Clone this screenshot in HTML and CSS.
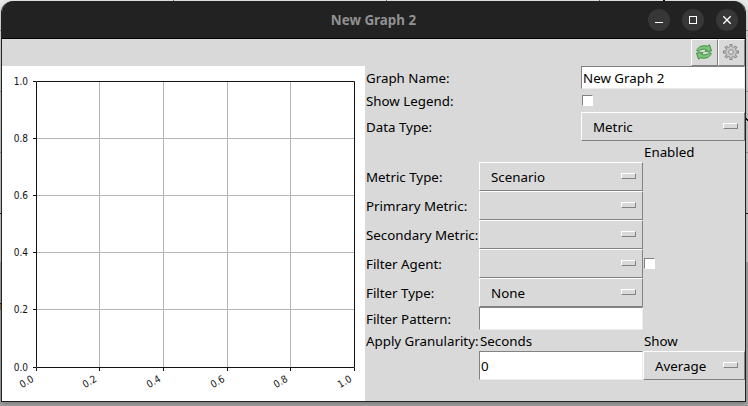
FILE: index.html
```
<!DOCTYPE html>
<html lang="en">
<head>
<meta charset="utf-8">
<title>New Graph 2</title>
<link rel="stylesheet" href="styles.css">
</head>
<body>
<main class="window">
  <header class="titlebar">
    <h1 class="title">New Graph 2</h1>
    <div class="controls">
      <svg width="22" height="22" viewBox="0 0 22 22"><circle cx="11" cy="11" r="11" fill="#373737"/><path d="M7 13.500h8" stroke="#fff"/></svg>
      <svg width="22" height="22" viewBox="0 0 22 22"><circle cx="11" cy="11" r="11" fill="#373737"/><rect x="7.500" y="7.500" width="7" height="7" fill="none" stroke="#fff"/></svg>
      <svg width="22" height="22" viewBox="0 0 22 22"><circle cx="11" cy="11" r="11" fill="#373737"/><path d="M7.300 7.300l7.400 7.400M14.700 7.300l-7.400 7.400" stroke="#fff" stroke-width="1.300"/></svg>
    </div>
  </header>
  <div class="toolbar">
    <button class="tool" aria-label="Refresh">
      <svg width="17" height="17" viewBox="0 0 17 17"><g fill="#7cc578" stroke="#37883c" stroke-width=".9" stroke-linejoin="round"><path d="M.7 6.800C2 2.800 6 .9 11.200 2.200L13.500.8l2 6.200-6.500.5 1.500-1.700C7.500 4.500 5 5 3.300 7.300z"/><path d="M15.300 9.200C14 13.200 10 15.100 4.800 13.800L2.500 15.200.5 9l6.500-.5-1.500 1.700c3 1.300 5.500.8 7.200-1.500z"/></g></svg>
    </button>
    <button class="tool" aria-label="Settings">
      <svg width="17" height="17" viewBox="0 0 17 17"><g transform="translate(8 8)"><path d="M0-8V8M-8 0H8M-5.500-5.500l11 11M5.500-5.500l-11 11" stroke="#858585" stroke-width="3"/><circle r="5.700" fill="#8a8a8a"/><path d="M0-7V7M-7 0H7M-4.900-4.900l9.800 9.800M4.900-4.900l-9.800 9.800" stroke="#c6c6c6" stroke-width="1.200"/><circle r="5" fill="#c6c6c6"/><circle r="2.300" fill="#dcdcdc" stroke="#888" stroke-width=".9"/></g></svg>
    </button>
  </div>
  <div class="content">
    <svg class="plot" width="363" height="335" viewBox="2 66 363 335">
      <path class="gridline" d="M99.500 81v286M163.500 81v286M227.500 81v286M290.500 81v286M36 138.500h318M36 195.500h318M36 252.500h318M36 309.500h318"/>
      <path class="axis" d="M36.500 81.500h318v286h-318zM33 81.500h3M33 138.500h3M33 195.500h3M33 252.500h3M33 309.500h3M33 367.500h3M36.500 368v3M99.500 368v3M163.500 368v3M227.500 368v3M290.500 368v3M354.500 368v3"/>
      <g class="ticks">
        <text x="28" y="85">1.0</text><text x="28" y="142">0.8</text><text x="28" y="199">0.6</text><text x="28" y="256">0.4</text><text x="28" y="313">0.2</text><text x="28" y="371">0.0</text>
        <text transform="translate(34.500 381) rotate(-30)">0.0</text><text transform="translate(97.500 381) rotate(-30)">0.2</text><text transform="translate(161.500 381) rotate(-30)">0.4</text><text transform="translate(225.500 381) rotate(-30)">0.6</text><text transform="translate(288.500 381) rotate(-30)">0.8</text><text transform="translate(352.500 381) rotate(-30)">1.0</text>
      </g>
    </svg>
    <form class="form">
      <div class="general">
        <span class="label">Graph Name:</span><div class="entry">New Graph 2</div>
        <span class="label">Show Legend:</span><div class="check"></div>
        <span class="label">Data Type:</span><div class="menu">Metric</div>
      </div>
      <div class="details">
        <span class="label enabled">Enabled</span>
        <span class="label">Metric Type:</span><div class="menu">Scenario</div><i></i>
        <span class="label">Primrary Metric:</span><div class="menu"></div><i></i>
        <span class="label">Secondary Metric:</span><div class="menu"></div><i></i>
        <span class="label">Filter Agent:</span><div class="menu"></div><div class="check"></div>
        <span class="label">Filter Type:</span><div class="menu">None</div><i></i>
        <span class="label">Filter Pattern:</span><div class="entry"></div><i></i>
        <span class="label">Apply Granularity:</span><span class="label">Seconds</span><span class="label">Show</span>
        <i></i><div class="entry">0</div><div class="menu">Average</div>
      </div>
    </form>
  </div>
</main>
</body>
</html>
```
FILE: styles.css
```
*, *::after { box-sizing: border-box; }
body {
  margin: 0;
  padding: 1px;
  height: 406px;
  overflow: hidden;
  /* desktop behind the window: rules, cursor tip and panels */
  background:
    linear-gradient(#777, #777) 173px 0 / 1px 1px no-repeat,
    linear-gradient(#777, #777) 386px 0 / 1px 1px no-repeat,
    linear-gradient(#777, #777) 599px 0 / 1px 1px no-repeat,
    linear-gradient(#111, #111) 663px 0 / 2px 1px no-repeat,
    linear-gradient(55deg, transparent 35%, #111 36%, #111 64%, transparent 65%) 746px 117px / 2px 5px no-repeat,
    linear-gradient(#999, #999) 0 30px / 100% 1px no-repeat,
    linear-gradient(#999, #999) 0 91px / 100% 1px no-repeat,
    linear-gradient(#999, #999) 0 152px / 100% 1px no-repeat,
    linear-gradient(#222, #222) 0 213px / 100% 1px no-repeat,
    linear-gradient(#87744a, #87744a) 0 304px / 1px 6px no-repeat,
    linear-gradient(#222, #222) 0 303px / 1px 1px no-repeat,
    linear-gradient(#e6e9e8 0, #cfcfcf 100px, #cacaca 262px, #a4a4a4 262px, #a4a4a4 100%);
}
.window {
  width: 745px;
  height: 401px;
  border: 1px solid #222;
  border-top: 0;
  border-radius: 12px 12px 0 0;
  background: #d9d9d9;
  box-shadow: 0 2px 5px rgba(0, 0, 0, .25);
  overflow: hidden;
  font: 13.33px/20px "Noto Sans", sans-serif;
  color: #000;
}
.titlebar {
  display: grid;
  grid-template-columns: 1fr auto;
  align-items: center;
  height: 38px;
  background: #222;
  border-bottom: 1px solid #000;
}
.title {
  grid-area: 1 / 1 / 2 / 3;
  margin: 0;
  text-align: center;
  font: bold 13.4px/20px "Noto Sans", sans-serif;
  color: #919191;
}
.controls {
  grid-area: 1 / 2;
  display: flex;
  gap: 12px;
  padding-right: 7px;
}
.toolbar {
  display: flex;
  justify-content: flex-end;
  height: 27px;
}
.tool {
  display: grid;
  place-items: center;
  width: 27px;
  height: 27px;
  padding: 0;
  background: #d9d9d9;
  border: 1px solid;
  border-color: #fff #828282 #828282 #fff;
}
.content { display: flex; height: 335px; }
.plot { display: block; flex: none; background: #fff; }
.gridline { fill: none; stroke: #b5b5b5; }
.axis { fill: none; stroke: #111; }
.ticks { font: 10px "DejaVu Sans Condensed", "DejaVu Sans", sans-serif; font-stretch: condensed; text-anchor: end; fill: #111; }
.form { width: 380px; }
.general {
  display: grid;
  grid-template-columns: 216px 164px;
  grid-template-rows: 23px 23px 29px;
}
.details {
  display: grid;
  grid-template-columns: 114px 164px 102px;
  grid-template-rows: 21px repeat(5, 29px) 23px 21px 29px;
}
.label { align-self: center; padding-left: 1px; white-space: nowrap; }
.enabled { grid-column: 3; }
.entry {
  display: flex;
  align-items: center;
  padding-left: 1px;
  background: #fff;
  border: 1px solid;
  border-color: #828282 #ececec #ececec #828282;
}
.menu {
  display: flex;
  align-items: center;
  justify-content: space-between;
  padding: 0 6px 0 11px;
  border: 1px solid;
  border-color: #fff #828282 #828282 #fff;
}
.menu::after {
  content: "";
  width: 15px;
  height: 6px;
  margin: 0 0 1px auto;
  border: 1px solid;
  border-color: #fff #828282 #828282 #fff;
}
.check {
  align-self: center;
  width: 11px;
  height: 11px;
  margin-left: 1px;
  background: #fff;
  border: 1px solid;
  border-color: #828282 #fff #fff #828282;
}
```
